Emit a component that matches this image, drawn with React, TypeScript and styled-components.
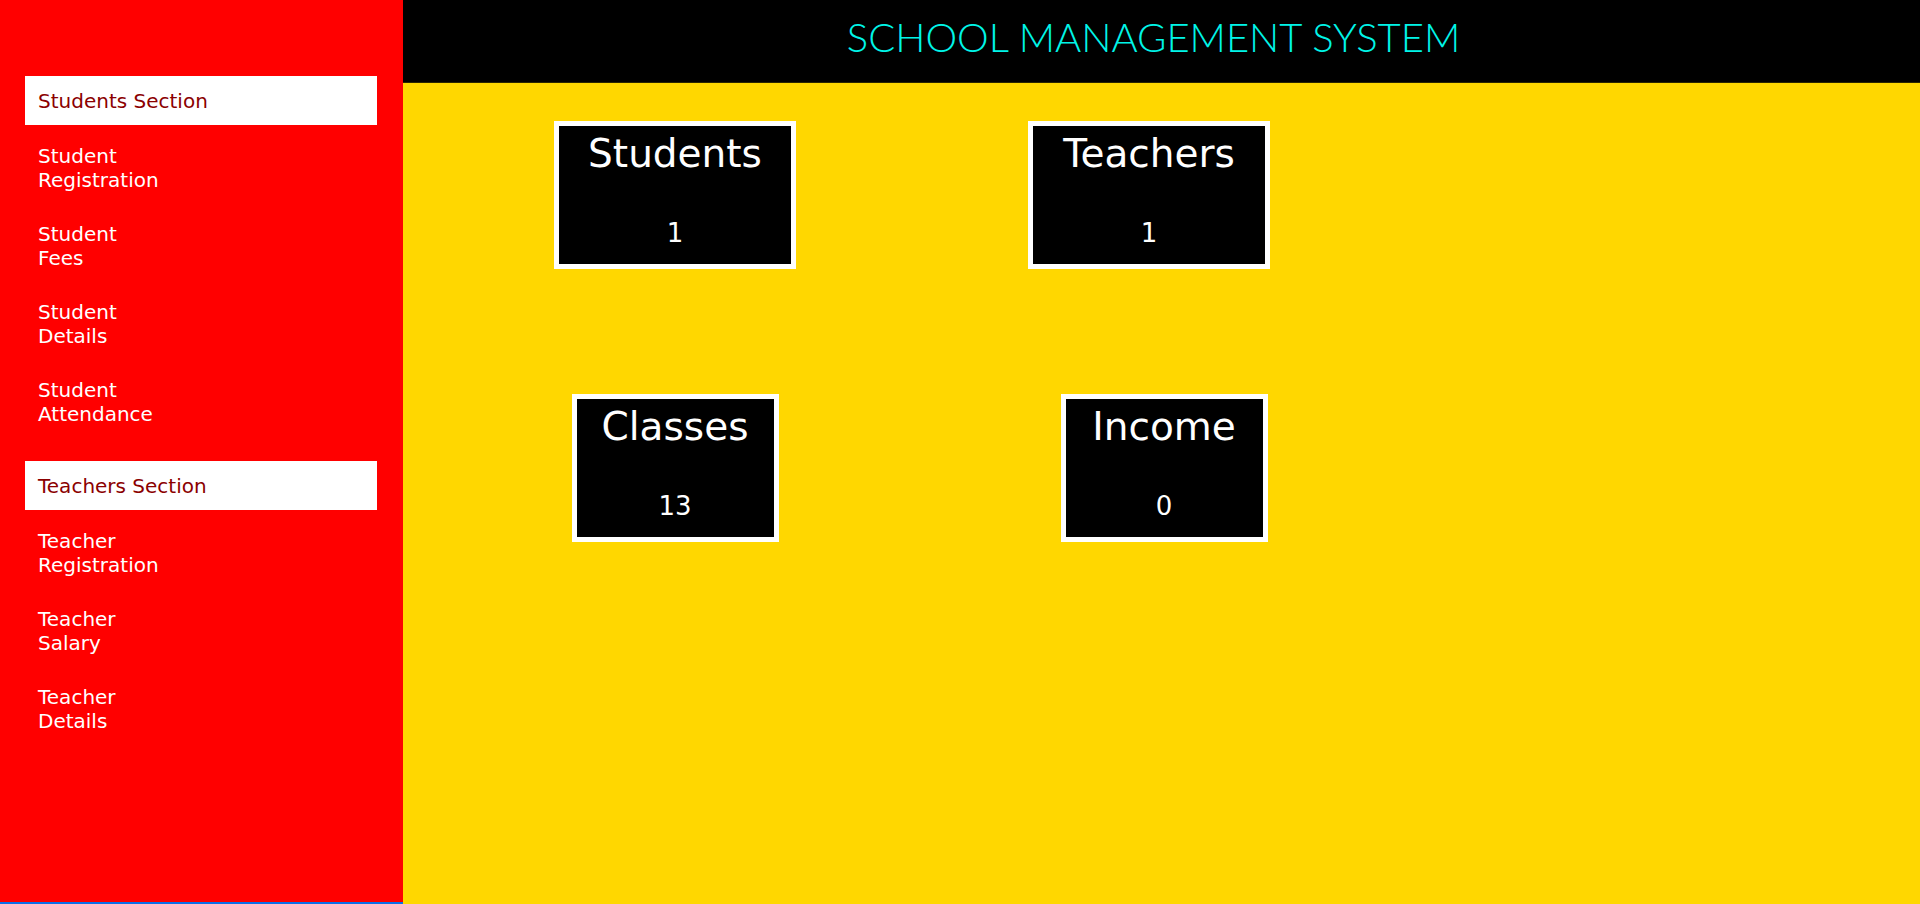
import React from 'react';
import styled, { createGlobalStyle } from 'styled-components';

const GlobalStyle = createGlobalStyle`
  html, body {
    margin: 0;
    padding: 0;
    height: 100%;
  }
  body {
    font-family: "DejaVu Sans", "Liberation Sans", sans-serif;
    background: #ffd700;
  }
  * {
    box-sizing: border-box;
  }
`;

const Layout = styled.div`
  display: flex;
  width: 100%;
  height: 100vh;
  min-height: 904px;
  overflow: hidden;
`;

const Sidebar = styled.aside`
  flex: 0 0 403px;
  background: #ff0000;
  padding: 76px 26px 0 25px;
  border-bottom: 2px solid #0b6fe8;
`;

const Section = styled.div`
  margin-bottom: 35px;
`;

const SectionTitle = styled.div`
  height: 49px;
  background: #ffffff;
  color: #8b0000;
  font-size: 20px;
  line-height: 47px;
  padding: 2px 0 0 13px;
  margin-bottom: 19px;
`;

const NavList = styled.ul`
  list-style: none;
  margin: 0;
  padding: 0 0 0 13px;
  display: flex;
  flex-direction: column;
  gap: 30px;
`;

const NavLink = styled.li`
  width: min-content;
  color: #ffffff;
  font-size: 20px;
  line-height: 24px;
  cursor: pointer;
`;

const Main = styled.div`
  flex: 1;
  display: flex;
  flex-direction: column;
  background: #ffd700;
`;

const Header = styled.header`
  height: 83px;
  background: #000000;
  border-bottom: 1px solid #2a2500;
  display: flex;
  justify-content: center;
  align-items: flex-start;
  padding: 13px 16px 0 0;
`;

const Title = styled.h1`
  margin: 0;
  font-family: Lato, "Liberation Sans", sans-serif;
  font-weight: 300;
  font-size: 40px;
  line-height: 48px;
  color: #00f5e8;
`;

const Board = styled.div`
  display: grid;
  grid-template-columns: 480px 480px;
  row-gap: 125px;
  padding: 38px 0 0 32px;
`;

// cards are not quite centred in their column in the original, hence the nudge
const Card = styled.div<{ $width: number; $nudge: number }>`
  justify-self: center;
  width: ${(p) => p.$width}px;
  height: 148px;
  margin-left: ${(p) => (p.$nudge > 0 ? p.$nudge * 2 : 0)}px;
  margin-right: ${(p) => (p.$nudge < 0 ? -p.$nudge * 2 : 0)}px;
  background: #000000;
  border: 5px solid #ffffff;
  color: #ffffff;
  text-align: center;
  padding-top: 4px;
`;

const CardTitle = styled.div`
  font-size: 39px;
  line-height: 48px;
  white-space: nowrap;
`;

const CardValue = styled.div`
  margin-top: 40px;
  font-size: 26px;
  line-height: 30px;
`;

const studentLinks = ['Student Registration', 'Student Fees', 'Student Details', 'Student Attendance'];
const teacherLinks = ['Teacher Registration', 'Teacher Salary', 'Teacher Details'];

const stats = [
  { label: 'Students', value: 1, width: 242, nudge: 0 },
  { label: 'Teachers', value: 1, width: 242, nudge: -6 },
  { label: 'Classes', value: 13, width: 207, nudge: 0 },
  { label: 'Income', value: 0, width: 207, nudge: 9 },
];

export default function App() {
  return (
    <>
      <GlobalStyle />
      <Layout>
        <Sidebar>
          <Section>
            <SectionTitle>Students Section</SectionTitle>
            <NavList>
              {studentLinks.map((l) => (
                <NavLink key={l}>{l}</NavLink>
              ))}
            </NavList>
          </Section>
          <Section>
            <SectionTitle>Teachers Section</SectionTitle>
            <NavList>
              {teacherLinks.map((l) => (
                <NavLink key={l}>{l}</NavLink>
              ))}
            </NavList>
          </Section>
        </Sidebar>
        <Main>
          <Header>
            <Title>SCHOOL MANAGEMENT SYSTEM</Title>
          </Header>
          <Board>
            {stats.map((s) => (
              <Card key={s.label} $width={s.width} $nudge={s.nudge}>
                <CardTitle>{s.label}</CardTitle>
                <CardValue>{s.value}</CardValue>
              </Card>
            ))}
          </Board>
        </Main>
      </Layout>
    </>
  );
}
